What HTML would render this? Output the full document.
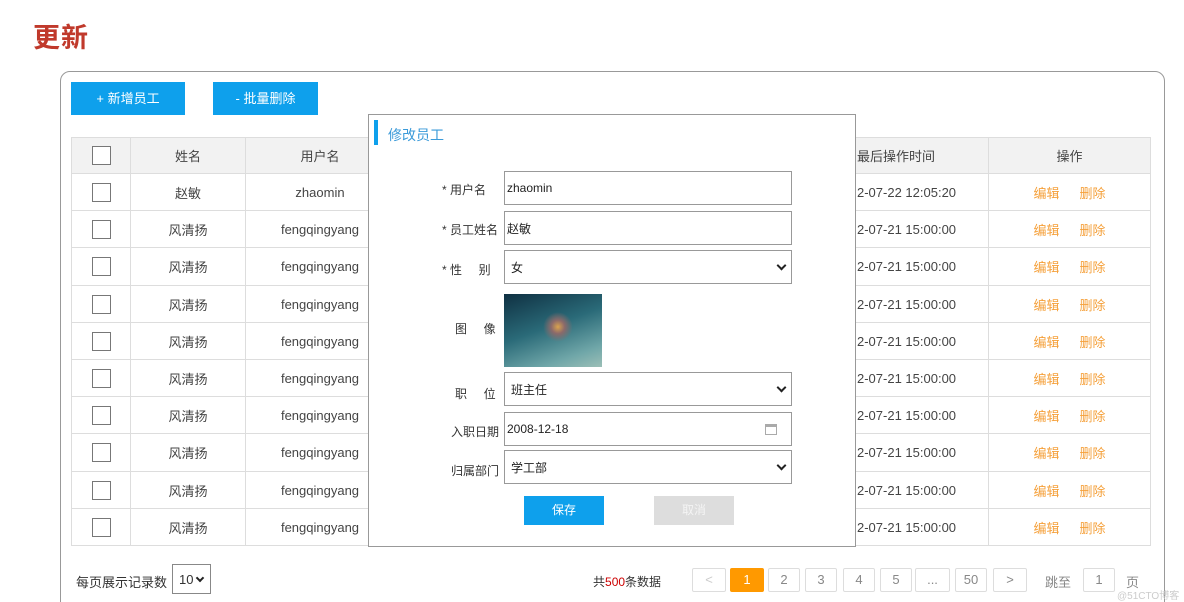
<!DOCTYPE html>
<html><head><meta charset="utf-8"><style>
*{margin:0;padding:0;box-sizing:border-box}
html,body{width:1184px;height:602px;overflow:hidden}
body{background:#fff;position:relative;font-family:"Liberation Sans","Noto Sans CJK SC",sans-serif;color:#333;font-size:13px}
.a{position:absolute}
h1{position:absolute;left:33px;top:16px;font-size:27px;color:#c0392b;font-weight:bold;letter-spacing:1px}
.box{left:60px;top:71px;width:1105px;height:560px;border:1px solid #999;border-radius:10px}
.btn{background:#0ea0ec;color:#fff;text-align:center;line-height:33px;font-size:13px;height:33px}
.cell{position:absolute;border:1px solid #ddd;display:flex;align-items:center;justify-content:center;font-size:13px;color:#444}
.hd{background:#f2f2f2}
.cb{width:19px;height:19px;border:1px solid #777;background:#fff}
.o{color:#f5a03a;margin:0 10px}
.modal{left:368px;top:114px;width:488px;height:433px;border:1px solid #999;background:#fff}
.lbl{position:absolute;font-size:12px;color:#333}
.inp{position:absolute;left:135px;width:288px;height:34px;border:1px solid #999;font-size:12px;padding-left:2px;display:flex;align-items:center;color:#222}
.chev{position:absolute;right:6px;top:11px;width:7px;height:7px;border-right:2px solid #222;border-bottom:2px solid #222;transform:rotate(45deg)}
.pg{position:absolute;top:568px;height:24px;border:1px solid #ddd;border-radius:2px;text-align:center;line-height:22px;color:#888;font-size:13px}
</style></head><body>
<h1>更新</h1>
<div class="a box"></div>
<div class="a btn" style="left:71px;top:82px;width:114px">+ 新增员工</div>
<div class="a btn" style="left:213px;top:82px;width:105px">- 批量删除</div>

<div class="cell hd" style="left:71px;top:137px;width:60px;height:37px"><div class="cb"></div></div>
<div class="cell hd" style="left:130px;top:137px;width:116px;height:37px">姓名</div>
<div class="cell hd" style="left:245px;top:137px;width:150px;height:37px">用户名</div>
<div class="cell hd" style="left:780px;top:137px;width:209px;height:37px;justify-content:flex-start;padding-left:76px">最后操作时间</div>
<div class="cell hd" style="left:988px;top:137px;width:163px;height:37px">操作</div>

<div id="rows"></div>
<script>
var h='';
for(var i=0;i<10;i++){
 var t=Math.round(173+i*37.2),b=Math.round(173+(i+1)*37.2),hh=b-t+1,n=i?'风清扬':'赵敏',u=i?'fengqingyang':'zhaomin',tm=i?'2-07-21 15:00:00':'2-07-22 12:05:20';
 h+='<div class="cell" style="left:71px;top:'+t+'px;width:60px;height:'+hh+'px"><div class="cb"></div></div>';
 h+='<div class="cell" style="left:130px;top:'+t+'px;width:116px;height:'+hh+'px">'+n+'</div>';
 h+='<div class="cell" style="left:245px;top:'+t+'px;width:150px;height:'+hh+'px">'+u+'</div>';
 h+='<div class="cell" style="left:780px;top:'+t+'px;width:209px;height:'+hh+'px;justify-content:flex-start;padding-left:76px">'+tm+'</div>';
 h+='<div class="cell" style="left:988px;top:'+t+'px;width:163px;height:'+hh+'px"><span class="o">编辑</span><span class="o">删除</span></div>';
}
document.getElementById('rows').innerHTML=h;
</script>

<div class="a modal">
 <div class="a" style="left:5px;top:5px;width:4px;height:25px;background:#0ea0ec"></div>
 <div class="a" style="left:19px;top:10px;font-size:14px;color:#3a9ad9">修改员工</div>
 <div class="lbl" style="left:73px;top:66px">* 用户名</div>
 <div class="inp" style="top:56px">zhaomin</div>
 <div class="lbl" style="left:73px;top:106px">* 员工姓名</div>
 <div class="inp" style="top:96px">赵敏</div>
 <div class="lbl" style="left:73px;top:146px">* 性&nbsp;&nbsp;&nbsp;&nbsp;&nbsp;别</div>
 <div class="inp" style="top:135px;padding-left:6px">女<div class="chev"></div></div>
 <div class="lbl" style="left:86px;top:205px">图&nbsp;&nbsp;&nbsp;&nbsp;&nbsp;像</div>
 <div class="a" style="left:135px;top:179px;width:98px;height:73px;background:radial-gradient(circle at 55% 45%,#d9a34e 0,#8c6a6a 10%,transparent 22%),linear-gradient(160deg,#0f3042 0%,#2a6a78 45%,#6fa6a8 80%,#9cbfb7 100%)"></div>
 <div class="lbl" style="left:86px;top:270px">职&nbsp;&nbsp;&nbsp;&nbsp;&nbsp;位</div>
 <div class="inp" style="top:257px;padding-left:6px">班主任<div class="chev"></div></div>
 <div class="lbl" style="left:82px;top:308px">入职日期</div>
 <div class="inp" style="top:297px">2008-12-18<div class="a" style="right:14px;top:11px;width:12px;height:11px;border:1px solid #aaa;border-top-width:3px"></div></div>
 <div class="lbl" style="left:82px;top:347px">归属部门</div>
 <div class="inp" style="top:335px;padding-left:6px">学工部<div class="chev"></div></div>
 <div class="a btn" style="left:155px;top:381px;width:80px;height:29px;line-height:29px;font-size:12px">保存</div>
 <div class="a" style="left:285px;top:381px;width:80px;height:29px;line-height:29px;background:#ddd;color:#f4f4f4;text-align:center;font-size:12px">取消</div>
</div>

<div class="a" style="left:76px;top:572px;font-size:13px">每页展示记录数</div>
<div class="a" style="left:172px;top:564px;width:39px;height:30px;border:1px solid #888;font-size:13px;padding:7px 0 0 6px">10<div class="a" style="right:7px;top:10px;width:6px;height:6px;border-right:2px solid #222;border-bottom:2px solid #222;transform:rotate(45deg)"></div></div>
<div class="a" style="left:593px;top:573px;font-size:12px">共<span style="color:#c00">500</span>条数据</div>
<div class="pg" style="left:692px;width:34px;color:#ccc">&lt;</div>
<div class="pg" style="left:730px;width:34px;background:#f90;border-color:#f90;color:#fff">1</div>
<div class="pg" style="left:768px;width:32px">2</div>
<div class="pg" style="left:805px;width:32px">3</div>
<div class="pg" style="left:843px;width:32px">4</div>
<div class="pg" style="left:880px;width:32px">5</div>
<div class="pg" style="left:915px;width:35px">...</div>
<div class="pg" style="left:955px;width:32px">50</div>
<div class="pg" style="left:993px;width:34px">&gt;</div>
<div class="a" style="left:1045px;top:572px;color:#888">跳至</div>
<div class="pg" style="left:1083px;width:32px">1</div>
<div class="a" style="left:1126px;top:572px;color:#888">页</div>
<div class="a" style="left:1117px;top:587px;font-size:10px;color:#ccc">@51CTO博客</div>
</body></html>
